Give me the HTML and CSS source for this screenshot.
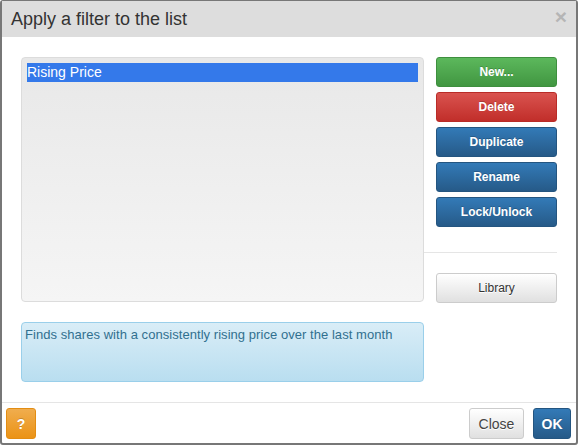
FILE: index.html
```html
<!DOCTYPE html>
<html lang="en">
<head>
    <meta charset="UTF-8">
    <title>Apply a filter to the list</title>
    <link rel="stylesheet" href="styles.css">
</head>
<body>
    <div class="dialog">
        <div class="dialog-header">
            <h4 class="dialog-title">Apply a filter to the list</h4>
            <span class="close-x">&times;</span>
        </div>

        <div class="dialog-body">
            <div class="left-col">
                <div class="filter-list">
                    <div class="filter-item selected">Rising Price</div>
                </div>
                <div class="filter-desc">Finds shares with a consistently rising price over the last month</div>
            </div>

            <div class="right-col">
                <button class="btn btn-success">New...</button>
                <button class="btn btn-danger">Delete</button>
                <button class="btn btn-primary">Duplicate</button>
                <button class="btn btn-primary">Rename</button>
                <button class="btn btn-primary">Lock/Unlock</button>
                <div class="divider"></div>
                <button class="btn btn-default">Library</button>
            </div>
        </div>

        <div class="dialog-footer">
            <button class="btn btn-warning btn-help">?</button>
            <div class="footer-right">
                <button class="btn btn-default btn-close">Close</button>
                <button class="btn btn-primary btn-ok">OK</button>
            </div>
        </div>
    </div>
</body>
</html>
```

FILE: styles.css
```css
html, body {
    margin: 0;
    padding: 0;
}

body {
    font-family: "Liberation Sans", Arial, sans-serif;
    background-color: #ffffff;
}

.dialog {
    box-sizing: border-box;
    width: 578px;
    height: 445px;
    border: 2px solid #777777;
    border-top-width: 1px;
    border-radius: 3px;
    display: flex;
    flex-direction: column;
    background-color: #ffffff;
}

.dialog-header {
    height: 36px;
    background-color: #dddddd;
    display: flex;
    align-items: center;
    justify-content: space-between;
    padding: 0 9px 0 9px;
}

.dialog-title {
    margin: 0;
    font-size: 18px;
    font-weight: normal;
    color: #333333;
}

.close-x {
    font-size: 21px;
    font-weight: bold;
    color: #b5b5b5;
    line-height: 1;
    margin-top: -6px;
}

.dialog-body {
    display: flex;
    gap: 12px;
    padding: 20px 19px 0 19px;
    height: 365px;
    box-sizing: border-box;
}

.left-col {
    width: 403px;
    flex-shrink: 0;
    display: flex;
    flex-direction: column;
}

.filter-list {
    box-sizing: border-box;
    height: 245px;
    padding: 5px;
    border: 1px solid #dcdcdc;
    border-radius: 4px;
    background: linear-gradient(to bottom, #e8e8e8 0%, #f5f5f5 100%);
}

.filter-item {
    height: 19px;
    line-height: 19px;
    font-size: 14px;
}

.filter-item.selected {
    background-color: #3479ea;
    color: #ffffff;
}

.filter-desc {
    box-sizing: border-box;
    margin-top: 20px;
    height: 60px;
    padding: 3px 3px;
    border: 1px solid #9acfea;
    border-radius: 4px;
    background: linear-gradient(to bottom, #d9edf7 0%, #b9def0 100%);
    color: #31708f;
    font-size: 13px;
    line-height: 17px;
    letter-spacing: 0.05px;
}

.right-col {
    width: 121px;
    flex-shrink: 0;
    display: flex;
    flex-direction: column;
    gap: 5px;
}

.btn {
    box-sizing: border-box;
    height: 30px;
    border: 1px solid #cccccc;
    border-radius: 3px;
    font-family: "Liberation Sans", Arial, sans-serif;
    font-size: 12px;
    cursor: pointer;
    padding: 0;
}

.right-col .btn {
    width: 121px;
    font-weight: bold;
}

.btn-success {
    color: #ffffff;
    border-color: #3e8f3e;
    background: linear-gradient(to bottom, #5cb85c 0%, #419641 100%);
    text-shadow: 0 -1px 0 rgba(0, 0, 0, 0.2);
}

.btn-danger {
    color: #ffffff;
    border-color: #b92c28;
    background: linear-gradient(to bottom, #d9534f 0%, #c12e2a 100%);
    text-shadow: 0 -1px 0 rgba(0, 0, 0, 0.2);
}

.btn-primary {
    color: #ffffff;
    border-color: #245580;
    background: linear-gradient(to bottom, #337ab7 0%, #265a88 100%);
    text-shadow: 0 -1px 0 rgba(0, 0, 0, 0.2);
}

.btn-warning {
    color: #ffffff;
    border-color: #e38d13;
    background: linear-gradient(to bottom, #f0ad4e 0%, #eb9316 100%);
    text-shadow: 0 -1px 0 rgba(0, 0, 0, 0.2);
}

.btn-default {
    color: #333333;
    border-color: #cccccc;
    background: linear-gradient(to bottom, #ffffff 0%, #e0e0e0 100%);
    text-shadow: 0 1px 0 #ffffff;
}

.right-col .btn-default {
    font-weight: normal;
}

.divider {
    height: 1px;
    background-color: #e5e5e5;
    margin: 20px 0 15px -12px;
    width: 133px;
}

.dialog-footer {
    flex: 1;
    border-top: 1px solid #e5e5e5;
    display: flex;
    justify-content: space-between;
    align-items: flex-start;
    padding: 5px 5px 0 4px;
}

.btn-help {
    width: 30px;
    height: 31px;
    font-size: 14px;
    font-weight: bold;
}

.footer-right {
    display: flex;
    gap: 9px;
}

.btn-close {
    width: 55px;
    height: 31px;
    font-size: 14px;
    color: #444444;
}

.btn-ok {
    width: 38px;
    height: 31px;
    font-size: 14px;
    font-weight: bold;
}
```
